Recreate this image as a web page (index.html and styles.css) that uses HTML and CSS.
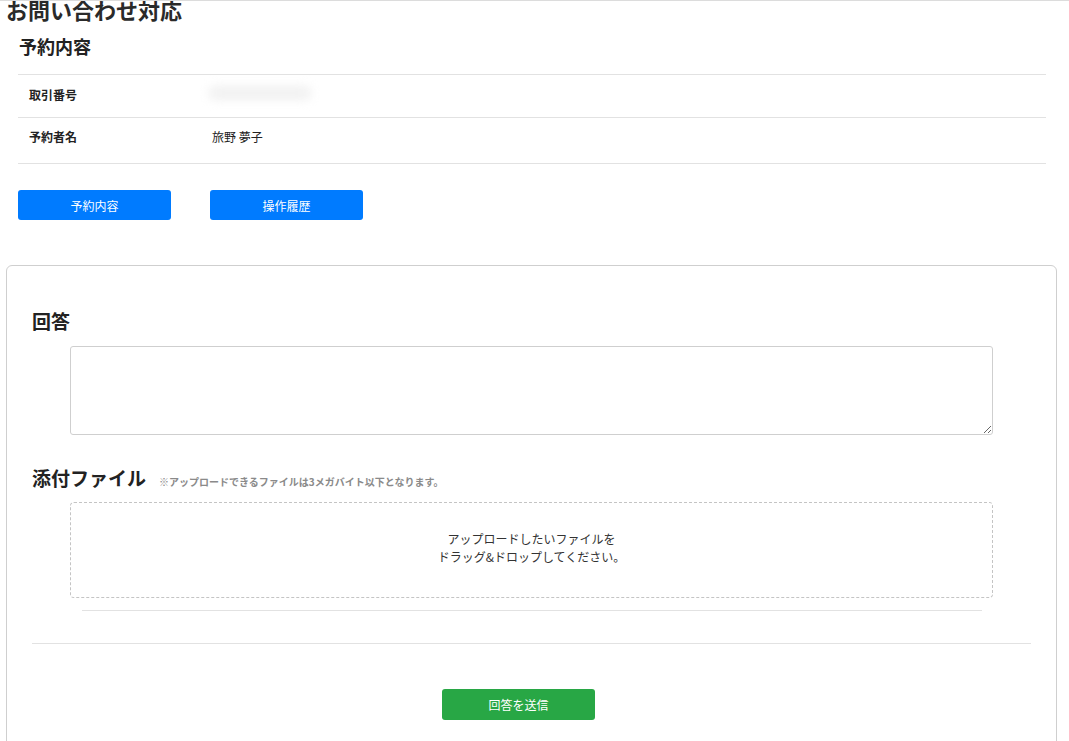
FILE: index.html
```html
<!DOCTYPE html>
<html lang="ja">

<head>
  <meta charset="UTF-8">
  <meta name="viewport" content="width=device-width, initial-scale=1.0">
  <title>お問い合わせ対応</title>
  <link rel="stylesheet" href="styles.css">
</head>

<body>
  <div class="page">
    <h1 class="page-title">お問い合わせ対応</h1>

    <div class="reserve">
      <h2 class="reserve-title">予約内容</h2>
      <div class="info-table">
        <div class="info-row">
          <div class="info-label">取引番号</div>
          <div class="info-value"><span class="masked"></span></div>
        </div>
        <div class="info-row info-row-last">
          <div class="info-label">予約者名</div>
          <div class="info-value">旅野 夢子</div>
        </div>
      </div>
      <div class="tab-buttons">
        <button type="button" class="btn btn-blue">予約内容</button>
        <button type="button" class="btn btn-blue">操作履歴</button>
      </div>
    </div>

    <div class="card">
      <h3 class="section-title">回答</h3>
      <div class="indent">
        <textarea class="answer"></textarea>
      </div>

      <div class="attach-head">
        <h3 class="section-title">添付ファイル</h3>
        <span class="attach-note">※アップロードできるファイルは3メガバイト以下となります。</span>
      </div>
      <div class="indent">
        <div class="dropzone">
          <p>アップロードしたいファイルを<br>ドラッグ&amp;ドロップしてください。</p>
        </div>
        <div class="file-divider"></div>
      </div>

      <div class="card-divider"></div>

      <div class="submit-row">
        <button type="button" class="btn btn-green">回答を送信</button>
      </div>
    </div>
  </div>
</body>

</html>
```

FILE: styles.css
```css
html {
  margin: 0;
  background-color: #fff;
}

body {
  margin: 0;
  border-top: 1px solid #dcdcdc;
  font-family: "Noto Sans CJK JP", "Noto Sans", sans-serif;
  color: #222;
  overflow: hidden;
}

.page {
  padding: 0 12px 0 6px;
}

.page-title {
  font-size: 22px;
  line-height: 22px;
  font-weight: bold;
  margin: -3px 0 0 0;
  color: #2a2a2a;
}

.reserve {
  margin: 0 11px 0 12px;
}

.reserve-title {
  font-size: 18px;
  line-height: 18px;
  font-weight: bold;
  margin: 17px 0 0 1px;
  color: #222;
}

.info-table {
  margin-top: 19px;
  border-top: 1px solid #e2e2e2;
}

.info-row {
  display: flex;
  align-items: center;
  height: 43px;
  padding-bottom: 4px;
  box-sizing: border-box;
  border-bottom: 1px solid #e2e2e2;
  font-size: 12px;
}

.info-row-last {
  height: 46px;
  padding-bottom: 8px;
}

.info-label {
  width: 183px;
  padding-left: 11px;
  font-weight: bold;
}

.info-value {
  color: #222;
}

.masked {
  display: inline-block;
  width: 104px;
  height: 16px;
  margin-left: -4px;
  background-color: #f3f3f3;
  border-radius: 8px;
  filter: blur(4px);
}

.tab-buttons {
  display: flex;
  gap: 39px;
  margin-top: 26px;
}

.btn {
  width: 153px;
  height: 30px;
  border: none;
  border-radius: 3px;
  color: #fff;
  font-family: inherit;
  font-size: 12px;
  cursor: pointer;
}

.btn-blue {
  background-color: #007bff;
}

.btn-green {
  background-color: #28a745;
  height: 31px;
}

.card {
  margin-top: 45px;
  border: 1px solid #cfcfcf;
  border-radius: 6px;
  padding: 45px 25px 60px 25px;
}

.section-title {
  font-size: 19px;
  line-height: 19px;
  font-weight: bold;
  margin: 0;
  color: #222;
}

.indent {
  padding: 0 38px;
}

.answer {
  display: block;
  width: 100%;
  height: 89px;
  box-sizing: border-box;
  margin-top: 16px;
  border: 1px solid #cfcfcf;
  border-radius: 3px;
  resize: vertical;
}

.attach-head {
  display: flex;
  align-items: baseline;
  margin-top: 33px;
}

.attach-head .section-title {
  font-size: 19px;
  line-height: 20px;
}

.attach-note {
  margin-left: 13px;
  font-size: 10px;
  font-weight: bold;
  color: #8a8a8a;
}

.dropzone {
  margin-top: 13px;
  height: 96px;
  box-sizing: border-box;
  padding-bottom: 4px;
  border: 1px dashed #c4c4c4;
  border-radius: 4px;
  display: flex;
  justify-content: center;
  align-items: center;
  text-align: center;
}

.dropzone p {
  margin: 0;
  font-size: 12px;
  line-height: 18px;
  color: #333;
}

.file-divider {
  height: 1px;
  background-color: #e2e2e2;
  margin: 12px 11px 0 12px;
}

.card-divider {
  height: 1px;
  background-color: #e2e2e2;
  margin-top: 32px;
}

.submit-row {
  display: flex;
  padding-left: 410px;
  margin-top: 45px;
}
```
